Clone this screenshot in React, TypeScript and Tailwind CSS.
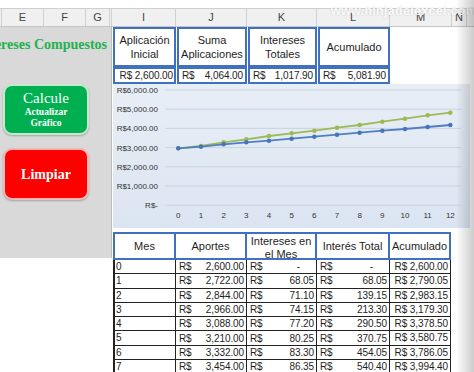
import React from "react";

const rows: [string, string, string, string, string][] = [
  ["0", "2,600.00", "-", "-", "2,600.00"],
  ["1", "2,722.00", "68.05", "68.05", "2,790.05"],
  ["2", "2,844.00", "71.10", "139.15", "2,983.15"],
  ["3", "2,966.00", "74.15", "213.30", "3,179.30"],
  ["4", "3,088.00", "77.20", "290.50", "3,378.50"],
  ["5", "3,210.00", "80.25", "370.75", "3,580.75"],
  ["6", "3,332.00", "83.30", "454.05", "3,786.05"],
  ["7", "3,454.00", "86.35", "540.40", "3,994.40"],
];

const greenY = [64.3, 62, 58.3, 55.3, 52, 49.3, 46.7, 43.7, 41, 37.7, 34.7, 31.3, 28.7];
const blueY = [64.3, 62.7, 60.3, 58.3, 56.7, 54.7, 52.7, 50.7, 48.7, 46.7, 45, 43, 41];
const xs = Array.from({ length: 13 }, (_, i) => 65.3 + i * 22.67);
const gridY = [6, 25.2, 44.4, 63.6, 82.8, 102, 121.2];
const yLabels = ["R$6,000.00", "R$5,000.00", "R$4,000.00", "R$3,000.00", "R$2,000.00", "R$1,000.00", "R$-"];

function Chart() {
  const pts = (ys: number[]) => xs.map((x, i) => `${x},${ys[i]}`).join(" ");
  return (
    <svg width="357" height="144" viewBox="0 0 357 144" className="block">
      <defs>
        <linearGradient id="bg" x1="0" y1="0" x2="0" y2="1">
          <stop offset="0" stopColor="#e8eef6" />
          <stop offset="1" stopColor="#dbe5f1" />
        </linearGradient>
      </defs>
      <rect x="0" y="0" width="357" height="144" fill="url(#bg)" />
      {gridY.map((y) => (
        <line key={y} x1="52" x2="348" y1={y} y2={y} stroke="#c9d4e2" strokeWidth="1" />
      ))}
      {yLabels.map((t, i) => (
        <text
          key={t}
          x="45"
          y={gridY[i] + 3}
          textAnchor="end"
          fontSize="8"
          fill="#333"
          fontFamily="'Liberation Sans', Arial, sans-serif"
        >
          {t}
        </text>
      ))}
      {xs.map((x, i) => (
        <text
          key={i}
          x={x}
          y="134"
          textAnchor="middle"
          fontSize="8"
          fill="#333"
          fontFamily="'Liberation Sans', Arial, sans-serif"
        >
          {i}
        </text>
      ))}
      <polyline points={pts(greenY)} fill="none" stroke="#9bbb59" strokeWidth="1.8" />
      {xs.map((x, i) => (
        <circle key={"g" + i} cx={x} cy={greenY[i]} r="2.2" fill="#a0b84e" />
      ))}
      <polyline points={pts(blueY)} fill="none" stroke="#4f7ec2" strokeWidth="1.8" />
      {xs.map((x, i) => (
        <circle key={"b" + i} cx={x} cy={blueY[i]} r="2.2" fill="#4474bd" />
      ))}
    </svg>
  );
}

function Money({ v }: { v: string }) {
  return (
    <div className="flex h-full items-center justify-between whitespace-nowrap pl-[3px] pr-[2px]">
      <span>R$</span>
      <span className={v === "-" ? "pr-[14px]" : ""}>{v}</span>
    </div>
  );
}

export default function App() {
  const hdr = "border-r border-[#d0d0d0] text-center";
  return (
    <div className="relative w-[474px] h-[372px] overflow-hidden bg-white font-['Liberation_Sans',Arial,sans-serif] text-[#1e1e1e]">
      {/* formula bar edge */}
      <div className="h-[9px] border-b border-[#cfcfcf] bg-white" />
      {/* column headers */}
      <div className="flex h-[18px] bg-[#f0f0f0] border-b border-[#c4c4c4] text-[11px] leading-[17px] text-[#444]">
        <div className={"w-[2px] " + hdr} />
        <div className={"w-[42px] " + hdr}>E</div>
        <div className={"w-[42px] " + hdr}>F</div>
        <div className={"w-[24px] " + hdr}>G</div>
        <div className={"w-[2px] " + hdr} />
        <div className={"w-[64px] " + hdr}>I</div>
        <div className={"w-[71px] " + hdr}>J</div>
        <div className={"w-[70px] " + hdr}>K</div>
        <div className={"w-[73px] " + hdr}>L</div>
        <div className={"w-[62px] " + hdr}>M</div>
        <div className="w-[15px] border-r border-[#d0d0d0] text-center">N</div>
      </div>

      <div className="flex">
        {/* left panel */}
        <div className="w-[112px] shrink-0">
          <div className="h-[231px] bg-[#d9d9d9] border-r border-[#bdbdbd] pt-[10px]">
            <div className="flex justify-end overflow-hidden whitespace-nowrap pr-[4px] font-['Liberation_Serif',serif] font-bold text-[14px] leading-[16px] text-[#22b14f]">
              Intereses Compuestos
            </div>
            <div className="ml-[3px] mt-[31px] flex h-[51px] w-[86px] flex-col items-center justify-center rounded-[9px] border-2 border-[#c5e8cf] bg-[#00b050] font-['Liberation_Serif',serif] text-white shadow-[0_1px_2px_rgba(0,0,0,0.25)]">
              <div className="text-[15px] leading-[15px]">Calcule</div>
              <div className="mt-[1px] text-[9.5px] font-bold leading-[11px]">Actualizar</div>
              <div className="text-[9.5px] font-bold leading-[11px]">Gráfico</div>
            </div>
            <div className="ml-[3px] mt-[13px] flex h-[52px] w-[86px] items-center justify-center rounded-[9px] border-2 border-[#f7b7b7] bg-[#ff0000] font-['Liberation_Serif',serif] text-[14px] font-bold text-white shadow-[0_1px_2px_rgba(0,0,0,0.25)]">
              Limpiar
            </div>
          </div>
        </div>

        {/* right area */}
        <div className="flex-1">
          {/* summary table */}
          <div className="flex flex-col pl-[1px] text-[11px]">
            <div className="flex h-[40px] gap-px">
              <div className="flex w-[63px] flex-col items-center justify-center whitespace-nowrap border-2 border-[#4170c0] leading-[14px]">
                <span>Aplicación</span>
                <span>Inicial</span>
              </div>
              <div className="flex w-[70px] flex-col items-center justify-center whitespace-nowrap border-2 border-[#4170c0] leading-[14px]">
                <span>Suma</span>
                <span>Aplicaciones</span>
              </div>
              <div className="flex w-[69px] flex-col items-center justify-center whitespace-nowrap border-2 border-[#4170c0] leading-[14px]">
                <span>Intereses</span>
                <span>Totales</span>
              </div>
              <div className="flex w-[72px] items-center justify-center border-2 border-[#4170c0]">Acumulado</div>
            </div>
            <div className="flex h-[17px] gap-px text-[10px] leading-[13px] tracking-[-0.1px]">
              <div className="flex w-[63px] items-center justify-end whitespace-nowrap border-2 border-[#4170c0] pr-[1px]">R$ 2,600.00</div>
              <div className="w-[70px] border-2 border-[#4170c0]">
                <Money v="4,064.00" />
              </div>
              <div className="w-[69px] border-2 border-[#4170c0]">
                <Money v="1,017.90" />
              </div>
              <div className="w-[72px] border-2 border-[#4170c0]">
                <Money v="5,081.90" />
              </div>
            </div>
          </div>

          {/* chart */}
          <div className="ml-[1px] h-[144px] w-[357px]">
            <Chart />
          </div>

          {/* detail table */}
          <div className="mt-[4px] pl-[1px] text-[11px]">
            <div className="flex h-[28px] bg-white">
              <div className="flex w-[63px] items-center justify-center border-2 border-[#4170c0]">Mes</div>
              <div className="flex w-[71px] items-center justify-center border-2 border-l-0 border-[#4170c0]">Aportes</div>
              <div className="flex w-[70px] flex-col items-center justify-start overflow-hidden whitespace-nowrap border-2 border-l-0 border-[#4170c0] pt-[1px] leading-[13px]">
                <span>Intereses en</span>
                <span>el Mes</span>
              </div>
              <div className="flex w-[73px] items-center justify-center whitespace-nowrap border-2 border-l-0 border-[#4170c0]">Interés Total</div>
              <div className="flex w-[61px] items-center justify-center border-2 border-l-0 border-[#4170c0]">Acumulado</div>
            </div>
            <div className="text-[10px] leading-[13px] tracking-[-0.1px]">
              {rows.map((r) => (
                <div key={r[0]} className="flex h-[14.3px]">
                  <div className="w-[63px] border-l-2 border-r border-b border-[#222] pl-[1px]">{r[0]}</div>
                  <div className="w-[71px] border-r border-b border-[#222]">
                    <Money v={r[1]} />
                  </div>
                  <div className="w-[70px] border-r border-b border-[#222]">
                    <Money v={r[2]} />
                  </div>
                  <div className="w-[73px] border-r border-b border-[#222]">
                    <Money v={r[3]} />
                  </div>
                  <div className="w-[61px] whitespace-nowrap border-r border-b border-[#222] pr-[2px] text-right">R$ {r[4]}</div>
                </div>
              ))}
            </div>
          </div>
        </div>
      </div>

      {/* watermark */}
      <div className="absolute left-[331px] top-[2px] whitespace-nowrap text-[12.5px] font-bold tracking-[0.3px] text-white/90 [text-shadow:0_0_2px_rgba(0,0,0,0.2)]">
        www.ninjadelexcel.com
      </div>
      {/* right edge shading */}
      <div className="pointer-events-none absolute right-0 top-0 h-full w-[18px] bg-linear-to-r from-transparent to-black/20" />
    </div>
  );
}
